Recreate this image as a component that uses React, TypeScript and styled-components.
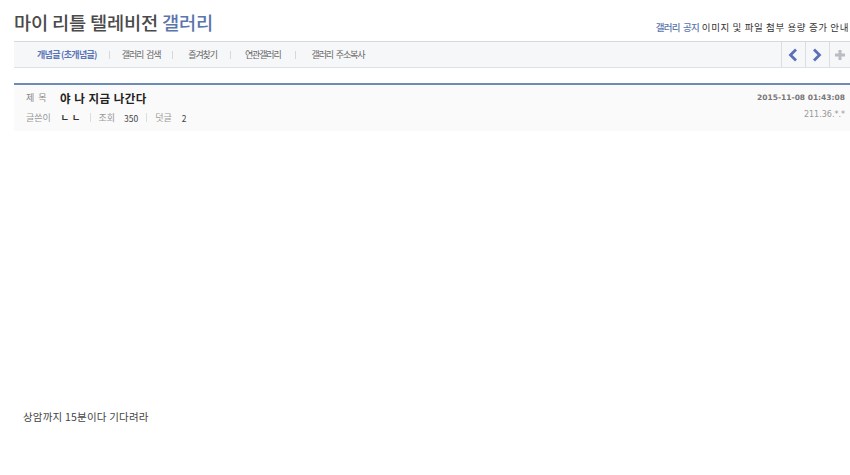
import React from "react";
import styled, {createGlobalStyle} from "styled-components";

const GlobalStyle = createGlobalStyle`
    html, body {
        margin: 0;
        padding: 0;
        background: #ffffff;
    }
    body {
        font-family: "Noto Sans CJK KR", "Noto Sans", sans-serif;
    }
`

const menuItems = [
    {label: "갤러리 검색", left: 12, right: 12},
    {label: "즐겨찾기", left: 12, right: 15},
    {label: "연관갤러리", left: 13, right: 14},
    {label: "갤러리 주소복사", left: 14, right: 16},
];

const App: React.FC = () => {
    return (
        <>
            <GlobalStyle />
            <Page>
                <Header>
                    <Title>마이 리틀 텔레비전 <TitleAccent>갤러리</TitleAccent></Title>
                    <Notice>
                        <NoticeLabel>갤러리 공지</NoticeLabel>
                        <NoticeText>이미지 및 파일 첨부 용량 증가 안내</NoticeText>
                    </Notice>
                </Header>
                <MenuBar>
                    <MenuList>
                        <MenuItem $active>개념글 (초개념글)</MenuItem>
                        {menuItems.map((item) => (
                            <React.Fragment key={item.label}>
                                <MenuDivider $left={item.left} $right={item.right} />
                                <MenuItem>{item.label}</MenuItem>
                            </React.Fragment>
                        ))}
                    </MenuList>
                    <MenuButton>
                        <ArrowIcon width="12" height="14" viewBox="0 0 12 14">
                            <path d="M9 1.5 L3.5 7 L9 12.5" fill="none" stroke="#5a72b5" strokeWidth="2.8" />
                        </ArrowIcon>
                    </MenuButton>
                    <MenuButton>
                        <ArrowIcon width="12" height="14" viewBox="0 0 12 14">
                            <path d="M3 1.5 L8.5 7 L3 12.5" fill="none" stroke="#5a72b5" strokeWidth="2.8" />
                        </ArrowIcon>
                    </MenuButton>
                    <MenuButton $narrow>
                        <svg width="12" height="12" viewBox="0 0 12 12">
                            <path d="M6 1 V11 M1 6 H11" fill="none" stroke="#b9bcc2" strokeWidth="3" />
                        </svg>
                    </MenuButton>
                </MenuBar>
                <PostHead>
                    <PostRow>
                        <SubjectLabel>제 목</SubjectLabel>
                        <Subject>야 나 지금 나간다</Subject>
                        <PostDate>2015-11-08 01:43:08</PostDate>
                    </PostRow>
                    <PostRow>
                        <InfoLabel>글쓴이</InfoLabel>
                        <Author>ㄴㄴ</Author>
                        <InfoDivider />
                        <InfoLabel>조회</InfoLabel>
                        <InfoValue>350</InfoValue>
                        <InfoDivider $wide />
                        <InfoLabel>덧글</InfoLabel>
                        <InfoValue $wide>2</InfoValue>
                        <PostIp>211.36.*.*</PostIp>
                    </PostRow>
                </PostHead>
                <PostBody>상암까지 15분이다 기다려라</PostBody>
            </Page>
        </>
    )
}

export default App;

const Page = styled.div`
    box-sizing: border-box;
    width: 850px;
    height: 475px;
    padding-left: 14px;
    overflow: hidden;
`

const Header = styled.div`
    display: flex;
    justify-content: space-between;
    align-items: flex-end;
    height: 41px;
    box-sizing: border-box;
    padding-bottom: 5px;
`

const Title = styled.h1`
    margin: 0;
    font-size: 18.7px;
    line-height: 28px;
    font-weight: 500;
    color: #4a4a4a;
    letter-spacing: -0.2px;
`

const TitleAccent = styled.span`
    color: #5a76ad;
`

const Notice = styled.div`
    display: flex;
    gap: 3px;
    font-size: 9.5px;
    line-height: 14px;
    margin-bottom: 2px;
    margin-right: 1px;
    white-space: nowrap;
`

const NoticeLabel = styled.span`
    color: #5a76ad;
    font-weight: 500;
    letter-spacing: -0.8px;
    word-spacing: 2px;
`

const NoticeText = styled.span`
    color: #333333;
    letter-spacing: 0.6px;
`

const MenuBar = styled.div`
    box-sizing: border-box;
    display: flex;
    align-items: stretch;
    height: 27px;
    background: #f6f7f9;
    border-top: 1px solid #d9d9d9;
    border-bottom: 1px solid #dfe1e6;
`

const MenuList = styled.div`
    flex: 1;
    display: flex;
    align-items: center;
    padding-left: 23px;
`

const MenuItem = styled.span<{ $active?: boolean }>`
    font-size: 9px;
    letter-spacing: ${({$active}) => ($active ? "-0.7px" : "-1.15px")};
    word-spacing: ${({$active}) => ($active ? "0" : "2px")};
    white-space: nowrap;
    font-weight: ${({$active}) => ($active ? 700 : 400)};
    color: ${({$active}) => ($active ? "#5a76b8" : "#666666")};
`

const MenuDivider = styled.span<{ $left: number; $right: number }>`
    width: 1px;
    height: 8px;
    margin: 0 ${({$right}) => $right}px 0 ${({$left}) => $left}px;
    background: #d5d7db;
`

const MenuButton = styled.div<{ $narrow?: boolean }>`
    box-sizing: border-box;
    width: ${({$narrow}) => ($narrow ? "21px" : "24px")};
    flex: none;
    display: flex;
    align-items: center;
    justify-content: center;
    border-left: 1px solid #dcdee3;
`

const ArrowIcon = styled.svg`
    margin-right: 2px;
`

const PostHead = styled.div`
    box-sizing: border-box;
    height: 48px;
    margin-top: 15px;
    padding: 3px 5px 0 12px;
    background: #fafafa;
    border-top: 2px solid #6d8bb5;
    display: flex;
    flex-direction: column;
    gap: 1px;
`

const PostRow = styled.div`
    display: flex;
    align-items: center;
    height: 19px;
`

const SubjectLabel = styled.span`
    width: 34px;
    font-size: 9px;
    color: #888888;
    letter-spacing: 1px;
`

const Subject = styled.span`
    font-size: 11.5px;
    font-weight: 700;
    color: #222222;
    letter-spacing: 0.5px;
`

const PostDate = styled.span`
    margin-left: auto;
    font-family: "DejaVu Sans", sans-serif;
    font-size: 7.5px;
    font-weight: 700;
    color: #777777;
`

const InfoLabel = styled.span`
    font-size: 9px;
    color: #999999;
`

const Author = styled.span`
    margin-left: 10px;
    font-size: 9px;
    font-weight: 700;
    letter-spacing: 3px;
    color: #333333;
`

const InfoValue = styled.span<{ $wide?: boolean }>`
    margin-left: ${({$wide}) => ($wide ? "10px" : "9px")};
    font-size: 8.5px;
    color: #444444;
`

const InfoDivider = styled.span<{ $wide?: boolean }>`
    width: 1px;
    height: 9px;
    margin: 0 ${({$wide}) => ($wide ? "8px" : "7px")};
    background: #dddddd;
`

const PostIp = styled.span`
    margin-left: auto;
    margin-bottom: 6px;
    font-family: "DejaVu Sans", sans-serif;
    font-size: 8px;
    color: #999999;
`

const PostBody = styled.div`
    margin-top: 278px;
    padding-left: 9px;
    font-size: 10.5px;
    line-height: 16px;
    letter-spacing: 0.2px;
    color: #444444;
`
